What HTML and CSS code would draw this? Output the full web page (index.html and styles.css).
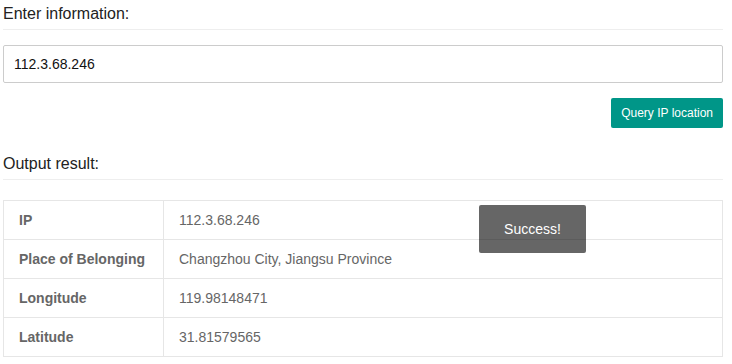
FILE: index.html
```html
<!DOCTYPE html>
<html lang="en">
<head>
    <meta charset="UTF-8">
    <meta name="viewport" content="width=device-width, initial-scale=1.0">
    <title>IP Location Query</title>
    <link rel="stylesheet" href="styles.css">
</head>
<body>
    <div class="container">
        <div class="block-title">Enter information:</div>
        <input type="text" class="ip-input" value="112.3.68.246">
        <div class="btn-row">
            <button class="btn" type="button">Query IP location</button>
        </div>
        <div class="block-title output-title">Output result:</div>
        <table class="result-table">
            <tr>
                <th>IP</th>
                <td>112.3.68.246</td>
            </tr>
            <tr>
                <th>Place of Belonging</th>
                <td>Changzhou City, Jiangsu Province</td>
            </tr>
            <tr>
                <th>Longitude</th>
                <td>119.98148471</td>
            </tr>
            <tr>
                <th>Latitude</th>
                <td>31.81579565</td>
            </tr>
        </table>
    </div>
    <div class="toast">Success!</div>
</body>
</html>
```

FILE: styles.css
```css
body {
    font-family: "Liberation Sans", Arial, sans-serif;
    margin: 0;
    padding: 0;
    color: #333;
    background-color: #fff;
}
.container {
    padding: 0 9px 0 3px;
}
.block-title {
    font-size: 16px;
    line-height: 24px;
    padding: 2px 0 3px 0;
    border-bottom: 1px solid #eee;
    color: #222;
}
.output-title {
    margin-top: 22px;
}
.ip-input {
    display: block;
    box-sizing: border-box;
    width: 100%;
    height: 38px;
    margin-top: 15px;
    padding: 0 10px;
    border: 1px solid #ccc;
    border-radius: 2px;
    font-family: inherit;
    font-size: 14px;
    color: #111;
    outline: none;
}
.btn-row {
    display: flex;
    justify-content: flex-end;
    margin-top: 15px;
}
.btn {
    height: 30px;
    padding: 0 10px;
    border: none;
    border-radius: 2px;
    background-color: #009688;
    color: #fff;
    font-family: inherit;
    font-size: 12px;
    cursor: pointer;
}
.result-table {
    width: 100%;
    margin-top: 20px;
    border-collapse: collapse;
    font-size: 14px;
    color: #666;
}
.result-table th,
.result-table td {
    border: 1px solid #e6e6e6;
    padding: 9px 15px;
    line-height: 20px;
    text-align: left;
}
.result-table th {
    width: 129px;
    font-weight: bold;
}
.toast {
    position: absolute;
    left: 479px;
    top: 205px;
    width: 107px;
    height: 48px;
    line-height: 48px;
    text-align: center;
    background-color: rgba(0, 0, 0, 0.6);
    border-radius: 2px;
    color: #fff;
    font-size: 14px;
}
```
